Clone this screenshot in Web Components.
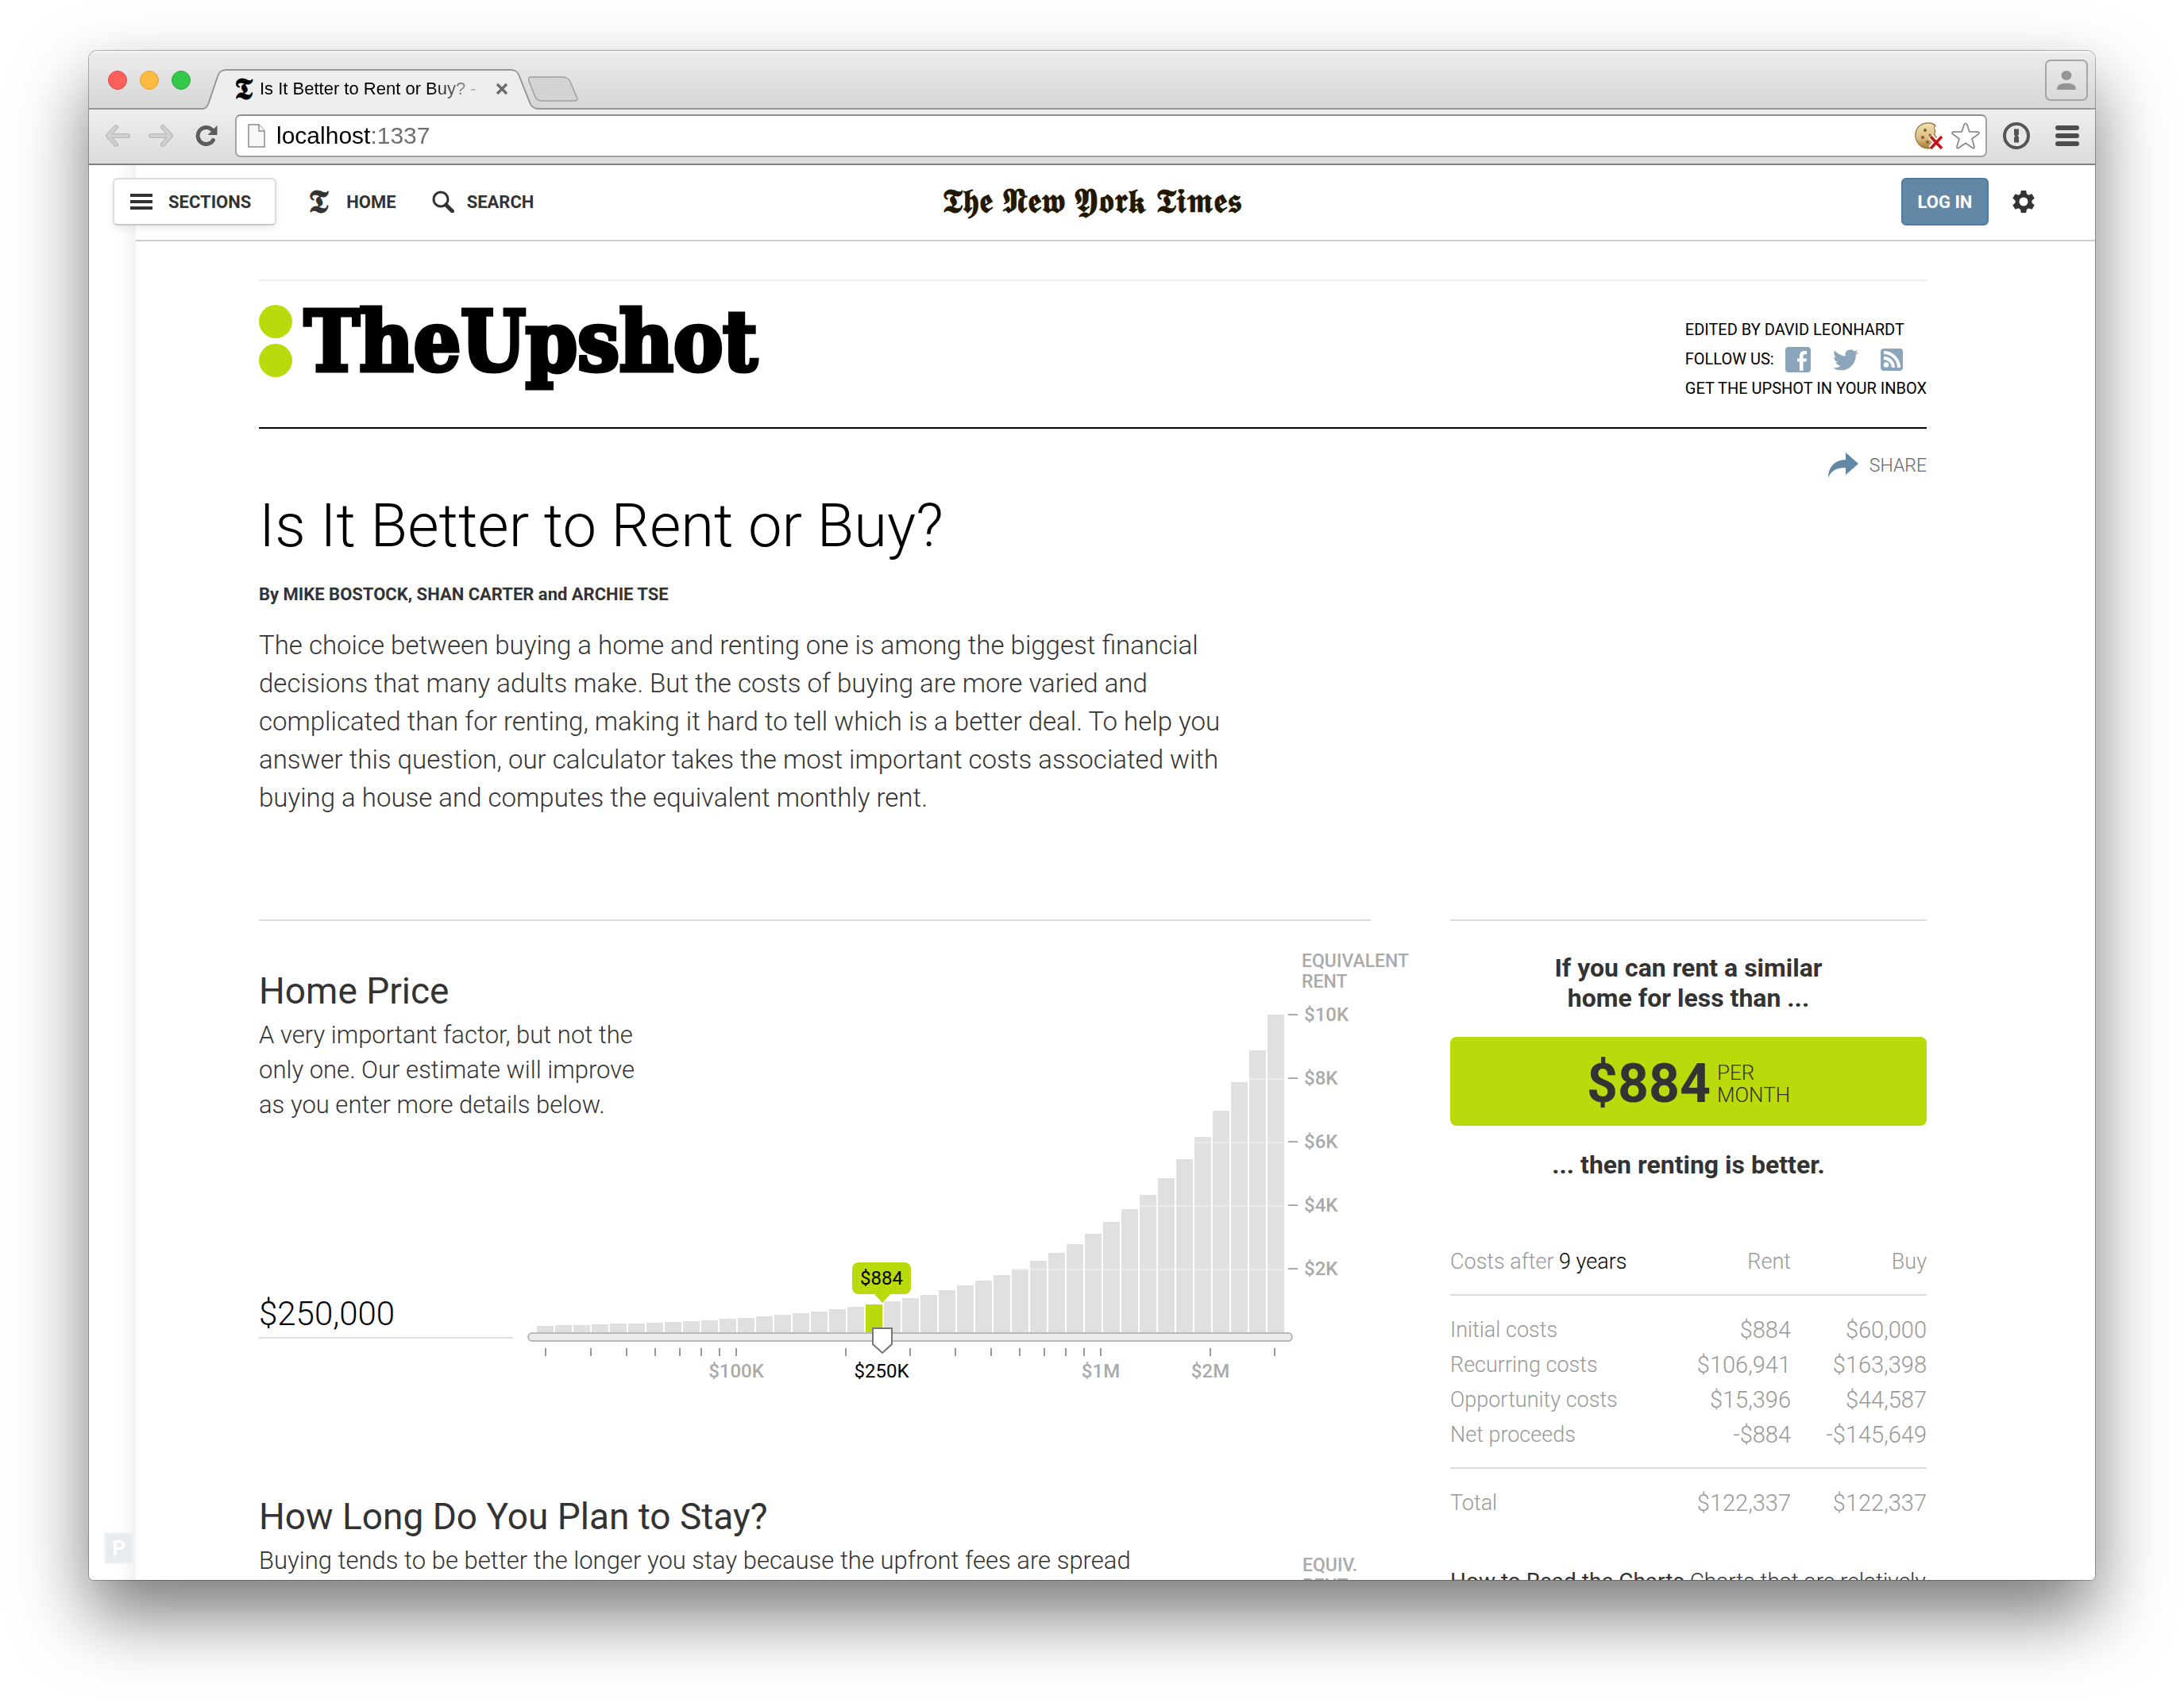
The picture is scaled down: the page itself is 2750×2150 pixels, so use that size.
<!DOCTYPE html>
<html lang="en">
<head>
<meta charset="utf-8">
<title>Is It Better to Rent or Buy? - The New York Times</title>
<style>
  html, body { margin: 0; height: 100%; background: #fff; }
  body { font-family: Roboto, "Liberation Sans", sans-serif; color: #333; overflow: hidden; }
</style>
</head>
<body>
<mac-window>
  <tab-strip slot="chrome"></tab-strip>
  <tool-bar slot="chrome"></tool-bar>
  <site-nav></site-nav>
  <upshot-page></upshot-page>
  <pin-badge slot="overlay"></pin-badge>
</mac-window>

<script>
const ICONS = {
  back: ['0 0 32 28', '<path d="M14 3 4 14l10 11M5 14h24" fill="none" stroke="#bdbdbd" stroke-width="6" stroke-linecap="round" stroke-linejoin="round"/><path d="M14 3 4 14l10 11M5 14h24" fill="none" stroke="#d2d2d2" stroke-width="3" stroke-linecap="round" stroke-linejoin="round"/>'],
  forward: ['0 0 32 28', '<path d="m18 3 10 11-10 11M27 14H3" fill="none" stroke="#bdbdbd" stroke-width="6" stroke-linecap="round" stroke-linejoin="round"/><path d="m18 3 10 11-10 11M27 14H3" fill="none" stroke="#d2d2d2" stroke-width="3" stroke-linecap="round" stroke-linejoin="round"/>'],
  reload: ['0 0 28 28', '<path d="M22.500 19.500A10.500 10.500 0 1 1 21 6.500" fill="none" stroke="#5c5c5c" stroke-width="5" stroke-linecap="round"/><path d="M27.500 1v12H15.500z" fill="#5c5c5c"/>'],
  page: ['0 0 22 31', '<path d="M1 1h13l7 8v20H1z" fill="#f8f8f8" stroke="#8c8c8c" stroke-width="1.500"/><path d="M14 1v8h7" fill="#fff" stroke="#8c8c8c" stroke-width="1.500"/>'],
  close: ['0 0 16 16', '<path d="m2 2 12 12M14 2 2 14" stroke="#6b6b6b" stroke-width="3.200"/>'],
  cookie: ['0 0 36 34', '<defs><linearGradient id="ck" x1="0" y1="0" x2="0" y2="1"><stop offset="0" stop-color="#f0e2b6"/><stop offset=".6" stop-color="#d9bd80"/><stop offset="1" stop-color="#a87a35"/></linearGradient></defs><path d="M26 4C20-1 8 0 3 8c-5 9-1 20 8 24 9 3 18-2 20-10-3 0-4-2-4-4-2-1-3-4-1-7-2-2-2-5 0-7z" fill="url(#ck)" stroke="#8f7038" stroke-width="1.200"/><circle cx="13" cy="10" r="2" fill="#8f5a26"/><circle cx="10" cy="19" r="2" fill="#8f5a26"/><circle cx="16" cy="25" r="2" fill="#8f5a26"/><circle cx="19" cy="16" r="1.500" fill="#8f5a26"/><path d="m20 18 14 15M34 18 20 33" stroke="#fff" stroke-width="7"/><path d="m20 18 14 15M34 18 20 33" stroke="#c21616" stroke-width="3.600"/>'],
  star: ['0 0 36 34', '<path d="M18 1.500c1 0 1.600.600 2 1.800l2.800 8.700 10.400.200c1.800 0 2.300 1.600 1 2.700l-8.200 5.900 3 9.900c.400 1.700-1 2.500-2.300 1.600L18 26.300l-8.700 6c-1.300.900-2.700.100-2.300-1.600l3-9.900-8.200-5.900c-1.300-1.100-.800-2.700 1-2.700l10.400-.200L16 3.300c.400-1.200 1-1.800 2-1.800z" fill="#fff" stroke="#858585" stroke-width="1.700"/>'],
  onepass: ['0 0 34 34', '<circle cx="17" cy="17" r="15" fill="#e8e8e8" stroke="#555" stroke-width="4"/><path d="M14 8.500h6v7l-1.500 1.500 1.500 1.500v7h-6v-6.500l1.500-1.500-1.500-1.500z" fill="#555"/>'],
  menu: ['0 0 30 26', '<path d="M3 3h24M3 13h24M3 23h24" stroke="#4d4d4d" stroke-width="6" stroke-linecap="round"/>'],
  person: ['0 0 24 24', '<ellipse cx="12" cy="6" rx="6.500" ry="6" fill="#949494"/><path d="M0 24c0-6 4-8 12-8s12 2 12 8z" fill="#949494"/>'],
  bars: ['0 0 28 20', '<path d="M0 2h28M0 10h28M0 18h28" stroke="#333" stroke-width="4"/>'],
  search: ['0 0 28 28', '<circle cx="11" cy="11" r="9" fill="none" stroke="#333" stroke-width="3"/><path d="m17.500 18 8 8" stroke="#333" stroke-width="5" stroke-linecap="round"/>'],
  gear: ['0 0 28 28', '<g fill="#333"><circle cx="14" cy="14" r="10.500"/><path id="t" d="M10.800 0h6.400l1 6h-8.400zM10.800 28h6.400l1-6h-8.400z"/><use href="#t" transform="rotate(60 14 14)"/><use href="#t" transform="rotate(120 14 14)"/></g><circle cx="14" cy="14" r="5.500" fill="#fff"/>'],
  facebook: ['0 0 32 32', '<rect width="32" height="32" rx="4" fill="#8ba6bc"/><path d="M18 30V18.500h-3v-4h3v-3.200C18 7.300 20 5 24 5h3v4.200h-2.200c-1.800 0-2.300.800-2.300 2.300v3h4.500l-.600 4h-3.900V30z" fill="#fff"/>'],
  twitter: ['0 1.500 24 20.500', '<path fill="#8ba6bc" d="M23.953 4.570a10 10 0 01-2.825.775 4.958 4.958 0 002.163-2.723c-.951.555-2.005.959-3.127 1.184a4.920 4.920 0 00-8.384 4.482C7.690 8.095 4.067 6.130 1.640 3.162a4.822 4.822 0 00-.666 2.475c0 1.710.870 3.213 2.188 4.096a4.904 4.904 0 01-2.228-.616v.060a4.923 4.923 0 003.946 4.827 4.996 4.996 0 01-2.212.085 4.936 4.936 0 004.604 3.417 9.867 9.867 0 01-6.102 2.105c-.390 0-.779-.023-1.170-.067a13.995 13.995 0 007.557 2.209c9.053 0 13.998-7.496 13.998-13.985 0-.210 0-.420-.015-.630A9.935 9.935 0 0024 4.590z"/>'],
  rss: ['0 0 28 28', '<rect width="28" height="28" rx="4" fill="#8ba6bc"/><circle cx="7" cy="20.500" r="3.200" fill="#fff"/><path d="M4 12a12 12 0 0 1 12 12M4 5a19 19 0 0 1 19 19" fill="none" stroke="#fff" stroke-width="4"/>'],
  share: ['0 0 38 32', '<path d="M22 0l16 14-16 14v-9C11 19 4 22 0 32 0 18 8 9.500 22 9z" fill="#6288a5"/>']
};

const base = 'box-sizing:border-box;';
function define(name, css, html, after) {
  const template = document.createElement('template');
  template.innerHTML = `<style>*,*::before,*::after{${base}}:host{display:block;${base}}button,input{font:inherit;color:inherit}a{color:inherit;text-decoration:none}h1,h2,p{margin:0}${css}</style>${html}`;
  customElements.define(name, class extends HTMLElement {
    constructor() {
      super();
      this.attachShadow({ mode: 'open' }).append(template.content.cloneNode(true));
    }
    connectedCallback() { if (after) after(this.shadowRoot, this); }
  });
}

define('ui-icon', ':host{display:block;flex:none}svg{display:block;width:100%;height:100%}', '', (root, el) => {
  if (root.querySelector('svg')) return;
  const [box, body] = ICONS[el.getAttribute('name')];
  const holder = document.createElement('template');
  holder.innerHTML = `<svg viewBox="${box}" aria-hidden="true">${body}</svg>`;
  root.append(holder.content);
});

define('times-mark', `
  :host{display:block;flex:none;font-family:serif;font-weight:400;line-height:1;-webkit-text-stroke:1px currentColor}
`, '<span aria-hidden="true">𝕿</span>');

define('mac-window', `
  :host{height:100vh;padding:64px 112px 160px}
  .window{position:relative;height:100%;display:flex;flex-direction:column;overflow:hidden;background:#fff;
    border-radius:10px 10px 6px 6px}
  .frame{height:100%;border-radius:10px 10px 6px 6px;box-shadow:0 0 0 1px rgba(0,0,0,.28),0 44px 90px rgba(0,0,0,.53)}
  .page{flex:1;min-height:0;overflow:hidden;background:linear-gradient(to right,#fff 34px,#f3f3f3 59px,#fff 59px)}
`, `<div class="frame"><div class="window">
    <slot name="chrome"></slot>
    <div class="page"><slot></slot></div>
    <slot name="overlay"></slot>
  </div></div>`);

define('tab-strip', `
  :host{height:74px;flex:none;font-family:"Liberation Sans",sans-serif;
    background:linear-gradient(#979797,#979797) 0 100%/100% 2px no-repeat,linear-gradient(#f6f6f6 0,#ebebeb 4px,#d5d5d5 100%)}
  .strip{height:100%;display:flex;align-items:center;padding:0 9px 0 24px}
  .lights{display:flex;gap:16px}
  .lights button{width:24px;height:24px;border-radius:50%;padding:0;border:1px solid}
  .red{background:#fc605b;border-color:#df4744!important}.yellow{background:#fdbc40;border-color:#de9f34!important}.green{background:#34c84a;border-color:#27aa35!important}
  .tab{position:relative;align-self:flex-end;width:420px;height:51px;margin-left:16px;padding:0 36px 2px 39px;display:flex;align-items:center;gap:10px;color:#000;font-size:22px}
  .tab>svg{position:absolute;inset:0;width:100%;height:100%}
  .tab>*:not(svg){position:relative}
  times-mark{width:22px;font-size:38px}
  .title{flex:1;white-space:nowrap;overflow:hidden;line-height:28px;-webkit-mask-image:linear-gradient(to right,#000 215px,transparent 290px);mask-image:linear-gradient(to right,#000 215px,transparent 290px)}
  .tab button{width:16px;height:16px;border:0;padding:0;background:none}
  .new{margin-left:-12px;width:64px;height:32px;padding:0;border:0;background:none;margin-top:22px}
  .new svg{display:block;width:100%;height:100%}
  .profile{margin-left:auto;width:54px;height:52px;border:2px solid #a5a5a5;border-radius:7px;background:none;display:flex;align-items:center;justify-content:center;padding:0}
  .profile ui-icon{width:24px;height:24px}
`, `<div class="strip">
  <div class="lights"><button class="red" aria-label="Close window"></button><button class="yellow" aria-label="Minimise"></button><button class="green" aria-label="Zoom"></button></div>
  <div class="tab" role="tab" aria-selected="true">
    <svg viewBox="0 0 418 51" preserveAspectRatio="none" aria-hidden="true"><path d="M0 51C4 49 5 47 7 42L18 9C20 3 23 1 29 1H385C391 1 394 3 396 9L409 42C411 47 413 49 418 51Z" fill="#eeeeee"/><path d="M0 50C4 49 5 47 7 42L18 9C20 3 23 1 29 1H385C391 1 394 3 396 9L409 42C411 47 413 49 418 50" fill="none" stroke="#979797" stroke-width="2"/></svg>
    <times-mark></times-mark>
    <span class="title">Is It Better to Rent or Buy? -</span>
    <button aria-label="Close tab"><ui-icon name="close"></ui-icon></button>
  </div>
  <button class="new" aria-label="New tab"><svg viewBox="0 0 64 32" aria-hidden="true"><path d="M5 1H44C50 1 53 3 55 9L62 26C64 30 63 31 59 31H18C13 31 11 29 9 24L2 6C1 2 2 1 5 1Z" fill="#d3d3d3" stroke="#a0a0a0" stroke-width="1.500"/></svg></button>
  <button class="profile" aria-label="Profile"><ui-icon name="person"></ui-icon></button>
</div>`);

define('tool-bar', `
  :host{flex:none;height:70px;border-bottom:2px solid #7e7e7e;background:linear-gradient(#eeeeee,#dcdcdc);font-family:"Liberation Sans",sans-serif}
  .bar{height:100%;display:flex;align-items:center;padding:6px 20px 8px}
  button{border:0;background:none;padding:0;flex:none}
  .nav{width:32px;height:28px;margin-right:23px}
  .reload{width:28px;height:28px;margin-left:4px;margin-right:22px}
  .address{flex:1;height:54px;display:flex;align-items:center;gap:10px;padding:0 7px 0 14px;background:#fff;border:2px solid #a3a3a3;border-top-color:#8f8f8f;border-radius:7px}
  .page{width:22px;height:31px;margin-right:4px}
  input{flex:1;min-width:0;border:0;outline:0;padding:0;height:46px;font-size:30px;color:transparent;background:linear-gradient(to right,#000 119px,#6e6e6e 119px);-webkit-background-clip:text;background-clip:text}
  .address button{width:36px;height:34px}
  .pass{width:34px;height:34px;margin:0 32px 0 20px}
  .menu{width:30px;height:26px}
`, `<div class="bar">
  <button class="nav" aria-label="Back"><ui-icon name="back"></ui-icon></button>
  <button class="nav" aria-label="Forward"><ui-icon name="forward"></ui-icon></button>
  <button class="reload" aria-label="Reload"><ui-icon name="reload"></ui-icon></button>
  <div class="address">
    <ui-icon class="page" name="page"></ui-icon>
    <input type="text" aria-label="Address" value="localhost:1337">
    <button aria-label="Cookies blocked"><ui-icon name="cookie"></ui-icon></button>
    <button aria-label="Bookmark"><ui-icon name="star"></ui-icon></button>
  </div>
  <button class="pass" aria-label="Password manager"><ui-icon name="onepass"></ui-icon></button>
  <button class="menu" aria-label="Menu"><ui-icon name="menu"></ui-icon></button>
</div>`);

define('site-nav', `
  :host{height:96px;padding:16px 30px 20px;background:linear-gradient(#ccc,#ccc) 59px 100%/100% 2px no-repeat;font-weight:700;font-size:22px}
  nav{display:grid;grid-template-columns:1fr auto 1fr;align-items:center;height:60px}
  .left,.right{display:flex;align-items:center}
  .right{justify-content:flex-end;gap:30px;padding-right:46px}
  a,.sections{display:flex;align-items:center}
  .sections{height:60px;padding:0 30px 0 20px;gap:20px;background:#fff;border:2px solid #ddd;border-bottom-color:#c9c9c9;border-radius:6px;box-shadow:0 4px 8px rgba(0,0,0,.08)}
  .sections ui-icon{width:28px;height:20px}
  .home{margin-left:40px;gap:20px}
  .home times-mark{width:28px;font-size:42px}
  .search{margin-left:45px;gap:16px}
  .search ui-icon{width:28px;height:28px}
  .wordmark{color:#231700;font:400 43px/60px serif;white-space:nowrap;-webkit-text-stroke:1px #231700}
  .login{width:110px;height:60px;padding:0;background:#6288a5;border:2px solid #4e7da3;border-radius:6px;color:#fff}
  .gear{width:28px;height:28px;border:0;padding:0;background:none}
`, `<nav aria-label="Site">
  <div class="left">
    <button class="sections"><ui-icon name="bars"></ui-icon>SECTIONS</button>
    <a class="home" href="#home"><times-mark></times-mark>HOME</a>
    <a class="search" href="#search"><ui-icon name="search"></ui-icon>SEARCH</a>
  </div>
  <a class="wordmark" href="#home" aria-label="The New York Times">𝕿𝖍𝖊 𝕹𝖊𝖜 𝖄𝖔𝖗𝖐 𝕿𝖎𝖒𝖊𝖘</a>
  <div class="right">
    <button class="login">LOG IN</button>
    <button class="gear" aria-label="Settings"><ui-icon name="gear"></ui-icon></button>
  </div>
</nav>`);

define('upshot-masthead', `
  :host{margin-top:48px;border-top:2px solid #ebebeb;border-bottom:2px solid #000}
  header{display:flex;justify-content:space-between;align-items:flex-start;padding:30px 0 30px}
  .logo{display:flex;gap:15px;color:#000}
  .dots{display:flex;flex-direction:column;gap:7px}
  .dots i{width:42px;height:42px;border-radius:50%;background:#bbda0b}
  .name{font:700 104px/93px "DejaVu Serif Condensed","DejaVu Serif",serif;-webkit-text-stroke:5px #000}
  .about{padding-top:13px;font-size:20px;line-height:37px;color:#000;white-space:nowrap}
  .follow{display:flex;align-items:center}
  .follow a{display:block}
  .fb{width:32px;height:32px;margin-left:14px}.tw{width:32px;height:28px;margin-left:28px}.rs{width:28px;height:28px;margin-left:28px}
`, `<header>
  <a class="logo" href="#upshot"><span class="dots"><i></i><i></i></span><span class="name">TheUpshot</span></a>
  <div class="about">
    <div>EDITED BY DAVID LEONHARDT</div>
    <div class="follow">FOLLOW US:
      <a href="#fb" aria-label="Facebook"><ui-icon class="fb" name="facebook"></ui-icon></a>
      <a href="#tw" aria-label="Twitter"><ui-icon class="tw" name="twitter"></ui-icon></a>
      <a href="#rss" aria-label="RSS"><ui-icon class="rs" name="rss"></ui-icon></a></div>
    <a href="#inbox">GET THE UPSHOT IN YOUR INBOX</a>
  </div>
</header>`);

define('article-intro', `
  .share{display:flex;justify-content:flex-end;padding-top:30px}
  .share button{display:flex;align-items:center;gap:14px;height:32px;border:0;padding:0;background:none;color:#666;font-weight:300;font-size:23px}
  .share ui-icon{width:38px;height:32px}
  h1{margin-top:16px;font-size:76px;line-height:88px;font-weight:300;color:#000}
  .byline{margin-top:28px;font-size:22px;line-height:30px;font-weight:700}
  .lead{margin-top:25px;max-width:1250px;font-size:33px;line-height:48px;font-weight:300}
`, `<div class="share"><button><ui-icon name="share"></ui-icon>SHARE</button></div>
<h1>Is It Better to Rent or Buy?</h1>
<p class="byline">By MIKE BOSTOCK, SHAN CARTER and ARCHIE TSE</p>
<p class="lead">The choice between buying a home and renting one is among the biggest financial decisions that many adults make. But the costs of buying are more varied and complicated than for renting, making it hard to tell which is a better deal. To help you answer this question, our calculator takes the most important costs associated with buying a house and computes the equivalent monthly rent.</p>`);

define('home-price', `
  :host{border-top:2px solid #ddd;padding-top:30px}
  section{display:grid;grid-template-columns:338px minmax(0,1fr);grid-template-rows:auto 1fr}
  .intro{grid-area:1/1/2/3;padding-top:31px}
  h2{font-size:46px;line-height:54px;font-weight:400}
  .intro p{margin-top:7px;max-width:490px;font-size:31px;line-height:44px;font-weight:300}
  .price{grid-area:2/1;align-self:end;width:320px;margin-bottom:64px;border:0;border-bottom:2px solid #ddd;outline:0;padding:0 0 4px;height:58px;background:none;color:#000;font-size:42px;font-weight:300}
  .chart{grid-area:1/2/3/3;position:relative;color:#aaa;font-size:24px;font-weight:500;pointer-events:none}
  svg{display:block;overflow:visible}
  text{fill:#aaa}
  .on{fill:#000;font-weight:400}
  input[type=range]{pointer-events:auto;display:block;position:relative;appearance:none;-webkit-appearance:none;width:964px;height:12px;margin:0;border:2px solid #b8b8b8;border-radius:6px;background:#ececec;outline:0}
  input[type=range]::-webkit-slider-thumb{-webkit-appearance:none;position:relative;width:26px;height:33px;margin-top:9px;border:0;background:url("data:image/svg+xml,%3Csvg xmlns='http://www.w3.org/2000/svg' viewBox='0 0 26 33'%3E%3Cpath d='M1 1h24v20L13 32 1 21z' fill='%23fff' stroke='%23777' stroke-width='2'/%3E%3C/svg%3E") center/100% 100% no-repeat}
`, `<section>
  <div class="intro">
    <h2 id="label">Home Price</h2>
    <p id="help">A very important factor, but not the only one. Our estimate will improve as you enter more details below.</p>
  </div>
  <input class="price" type="text" value="$250,000" aria-labelledby="label" aria-describedby="help">
  <div class="chart">
    <svg class="plot" width="1108" height="488" role="img" aria-label="Equivalent rent by home price"></svg>
    <input type="range" min="0" max="1000" value="463" aria-labelledby="label">
    <svg class="axis" width="1108" height="60"></svg>
  </div>
</section>`, root => {
  // Bar heights in pixels; $2K of rent is 80 pixels tall.
  const heights = [8,9,9,10,11,11,12,13,14,15,17,18,20,22,24,26,29,32,35,39,43,47,53,59,65,72,80,90,100,111,124,139,155,173,194,218,246,279,315,355,400];
  const selected = 18, floor = 488;
  let plot = '<text x="975" y="28" font-size="23">EQUIVALENT</text><text x="975" y="54" font-size="23">RENT</text>';
  heights.forEach((h, i) => {
    plot += `<rect x="${12 + i * 23}" y="${floor - h}" width="21" height="${h}" fill="${i === selected ? '#bbda0b' : '#e0e0e0'}"/>`;
  });
  [2, 4, 6, 8, 10].forEach(k => {
    const y = floor - k * 40 + 1;
    if (k < 10) plot += `<path d="M12 ${y}H954" stroke="#fff" stroke-opacity=".7"/>`;
    plot += `<path d="M958 ${y - 1}h12" stroke="#aaa" stroke-width="2"/><text x="978" y="${y + 7}">$${k}K</text>`;
  });
  plot += '<path d="M417 400h58a8 8 0 0 1 8 8v24a8 8 0 0 1-8 8h-18l-10 11-10-11h-20a8 8 0 0 1-8-8v-24a8 8 0 0 1 8-8z" fill="#bbda0b"/><text class="on" x="446" y="428" text-anchor="middle">$884</text>';
  root.querySelector('.plot').innerHTML = plot;

  const at = v => Math.round(722 + Math.log10(v / 1e6) * 459);
  let axis = '';
  [3e4,4e4,5e4,6e4,7e4,8e4,9e4,1e5,2e5,3e5,4e5,5e5,6e5,7e5,8e5,9e5,1e6,2e6,3e6].forEach(v => {
    axis += `<path d="M${at(v)} 8v10" stroke="#999" stroke-width="2"/>`;
  });
  [[1e5, '$100K'], [2.5e5, '$250K'], [1e6, '$1M'], [2e6, '$2M']].forEach(([v, t]) => {
    axis += `<text ${v === 2.5e5 ? 'class="on"' : ''} x="${at(v)}" y="45" text-anchor="middle">${t}</text>`;
  });
  root.querySelector('.axis').innerHTML = axis;
});

define('stay-length', `
  :host{padding-top:133px}
  section{display:grid;grid-template-columns:1fr 86px}
  h2{font-size:46px;line-height:54px;font-weight:400}
  p{margin-top:7px;font-size:31px;line-height:44px;font-weight:300}
  .unit{padding-top:76px;color:#aaa;font-size:23px;line-height:26px;font-weight:500}
`, `<section>
  <div><h2>How Long Do You Plan to Stay?</h2><p>Buying tends to be better the longer you stay because the upfront fees are spread</p></div>
  <div class="unit">EQUIV.<br>RENT</div>
</section>`);

define('cost-summary', `
  :host{border-top:2px solid #ddd;padding-top:40px}
  .say{text-align:center;font-size:32px;line-height:38px;font-weight:700}
  .answer{display:flex;justify-content:center;gap:8px;margin:30px 0;padding:31px 0 25px;border-radius:8px;background:#bbda0b}
  .answer strong{font-size:68px;line-height:56px}
  .answer span{font-size:26px;line-height:28px;font-weight:300}
  table{width:100%;margin-top:81px;border-collapse:collapse;table-layout:fixed;color:#999;font-size:29px;line-height:44px;font-weight:300}
  th,td{padding:0;font-weight:300;text-align:right;white-space:nowrap}
  th{font-size:27px}
  th:first-child{text-align:left}
  th b{font-weight:300;color:#000}
  .rent{width:160px}.buy{width:171px}
  thead th{padding-bottom:19px;border-bottom:2px solid #ddd}
  .first>*{padding-top:21px}
  .last>*{padding-bottom:19px;border-bottom:2px solid #ddd}
  .how{margin-top:58px;font-size:28px;line-height:38px;font-weight:300;white-space:nowrap}
`, `<p class="say">If you can rent a similar<br>home for less than ...</p>
<div class="answer"><strong>$884</strong><span>PER<br>MONTH</span></div>
<p class="say">... then renting is better.</p>
<table>
  <colgroup><col><col class="rent"><col class="buy"></colgroup>
  <thead><tr><th scope="col">Costs after <b>9 years</b></th><th scope="col">Rent</th><th scope="col">Buy</th></tr></thead>
  <tbody>
    <tr class="first"><th scope="row">Initial costs</th><td>$884</td><td>$60,000</td></tr>
    <tr><th scope="row">Recurring costs</th><td>$106,941</td><td>$163,398</td></tr>
    <tr><th scope="row">Opportunity costs</th><td>$15,396</td><td>$44,587</td></tr>
    <tr class="last"><th scope="row">Net proceeds</th><td>-$884</td><td>-$145,649</td></tr>
  </tbody>
  <tfoot><tr class="first"><th scope="row">Total</th><td>$122,337</td><td>$122,337</td></tr></tfoot>
</table>
<p class="how"><strong>How to Read the Charts</strong> Charts that are relatively</p>`);

define('upshot-page', `
  :host{padding:0 212px 0 214px}
  .columns{display:grid;grid-template-columns:minmax(0,1fr) 600px;gap:100px;margin-top:129px}
`, `<upshot-masthead></upshot-masthead>
<main>
  <article-intro></article-intro>
  <div class="columns">
    <div><home-price></home-price><stay-length></stay-length></div>
    <aside><cost-summary></cost-summary></aside>
  </div>
</main>`);

define('pin-badge', `
  :host{position:absolute;left:19px;bottom:20px}
  span{display:flex;align-items:center;justify-content:center;width:38px;height:40px;background:#e9ecee;border:2px solid #f1f3f4;color:#fff;font:700 26px/1 Roboto,sans-serif}
`, '<span>P</span>');
</script>
</body>
</html>
